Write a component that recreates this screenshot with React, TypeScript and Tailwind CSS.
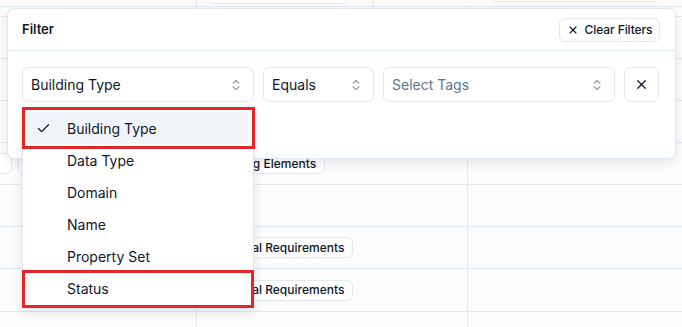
import React from 'react';
import { Check, ChevronsUpDown, X } from 'lucide-react';

const options = ['Building Type', 'Data Type', 'Domain', 'Name', 'Property Set', 'Status'];

function Tag({ children, className = '' }: { children?: React.ReactNode; className?: string }) {
  return (
    <span className={`inline-flex h-[21px] items-center whitespace-nowrap rounded-md border border-[#e2e8f0] bg-white px-2 text-[12px] font-medium text-[#0f172a] ${className}`}>
      {children}
    </span>
  );
}

function Row({ left, mid, h = 'h-[42px]' }: { left?: React.ReactNode; mid?: React.ReactNode; h?: string }) {
  return (
    <div className={`grid grid-cols-[197px_271px_1fr] border-b border-[#e2e8f0] ${h}`}>
      <div className="flex items-center gap-1.5 overflow-hidden border-r border-[#e2e8f0]">{left}</div>
      <div className="flex items-center overflow-hidden border-r border-[#e2e8f0] pl-2">{mid}</div>
      <div />
    </div>
  );
}

export default function App() {
  return (
    <div className="relative h-[327px] w-[682px] overflow-hidden bg-[#fcfcfd] font-['Inter',sans-serif] text-[#0f172a]">
      {/* table behind the popover */}
      <div className="flex flex-col">
        <div className="grid h-[7px] grid-cols-[197px_177px_1fr] border-b border-[#e2e8f0]">
          <div className="border-r border-[#e2e8f0]" />
          <div className="relative border-r border-[#e2e8f0]">
            <div className="absolute -top-4 left-[11px] h-[20px] w-[140px] rounded-md border border-[#e2e8f0] bg-white" />
          </div>
          <div className="relative">
            <div className="absolute -top-4 left-[117px] h-[18px] w-[168px] rounded-md border border-[#e2e8f0] bg-white" />
          </div>
        </div>
        <Row h="h-[10px]" />
        <Row />
        <Row />
        <Row />
        <Row
          left={
            <>
              <Tag className="-ml-[6px] w-[10px]" />
              <Tag>MEP</Tag>
            </>
          }
          mid={<Tag>Building Elements</Tag>}
        />
        <Row />
        <Row mid={<Tag>Physical Requirements</Tag>} />
        <Row h="h-[43px]" mid={<Tag>Physical Requirements</Tag>} />
        <Row />
      </div>

      {/* filter popover */}
      <div className="absolute left-[7px] top-[8px] h-[151px] w-[669px] rounded-lg border border-[#e2e8f0] bg-white shadow-[0_4px_12px_rgba(15,23,42,0.09)]">
        <div className="flex h-[42px] items-center justify-between border-b border-[#e2e8f0] pl-[14px] pr-[15px]">
          <span className="text-[13px] font-semibold">Filter</span>
          <button className="flex h-[24px] w-[101px] items-center justify-center gap-[6px] rounded-md border border-[#e2e8f0] text-[12px] font-medium tracking-[-0.1px]">
            <X size={12} strokeWidth={2.2} />
            Clear Filters
          </button>
        </div>
        <div className="flex gap-[9px] pl-[14px] pt-4">
          <div className="flex h-[35px] w-[232px] items-center justify-between rounded-md border border-[#e2e8f0] pl-2 pr-[10px] text-[14px]">
            Building Type
            <ChevronsUpDown size={14} className="text-[#64748b] opacity-70" />
          </div>
          <div className="flex h-[35px] w-[111px] items-center justify-between rounded-md border border-[#e2e8f0] pl-2 pr-[10px] text-[14px]">
            Equals
            <ChevronsUpDown size={14} className="text-[#64748b] opacity-70" />
          </div>
          <div className="flex h-[35px] w-[232px] items-center justify-between rounded-md border border-[#e2e8f0] pl-2 pr-[10px] text-[14px] text-[#64748b]">
            Select Tags
            <ChevronsUpDown size={14} className="opacity-70" />
          </div>
          <button className="flex h-[35px] w-[35px] items-center justify-center rounded-md border border-[#e2e8f0]">
            <X size={15} strokeWidth={2} />
          </button>
        </div>
      </div>

      {/* select dropdown */}
      <div className="absolute left-[22px] top-[107px] w-[232px] rounded-md border border-[#e2e8f0] bg-white p-1 shadow-[0_4px_12px_rgba(15,23,42,0.1)]">
        {options.map((o, i) => (
          <div
            key={o}
            className={`relative flex h-[32px] items-center rounded-sm pl-10 text-[14px] ${i === 0 ? 'bg-[#f1f5f9]' : ''}`}
          >
            {i === 0 && <Check size={15} strokeWidth={2} className="absolute left-[9px]" />}
            {o}
          </div>
        ))}
      </div>

      {/* annotation boxes */}
      <div className="absolute left-[22px] top-[107px] h-[42px] w-[233px] border-[3px] border-[#e3262a]" />
      <div className="absolute left-[22px] top-[270px] h-[38px] w-[232px] border-[3px] border-[#e3262a]" />
    </div>
  );
}
